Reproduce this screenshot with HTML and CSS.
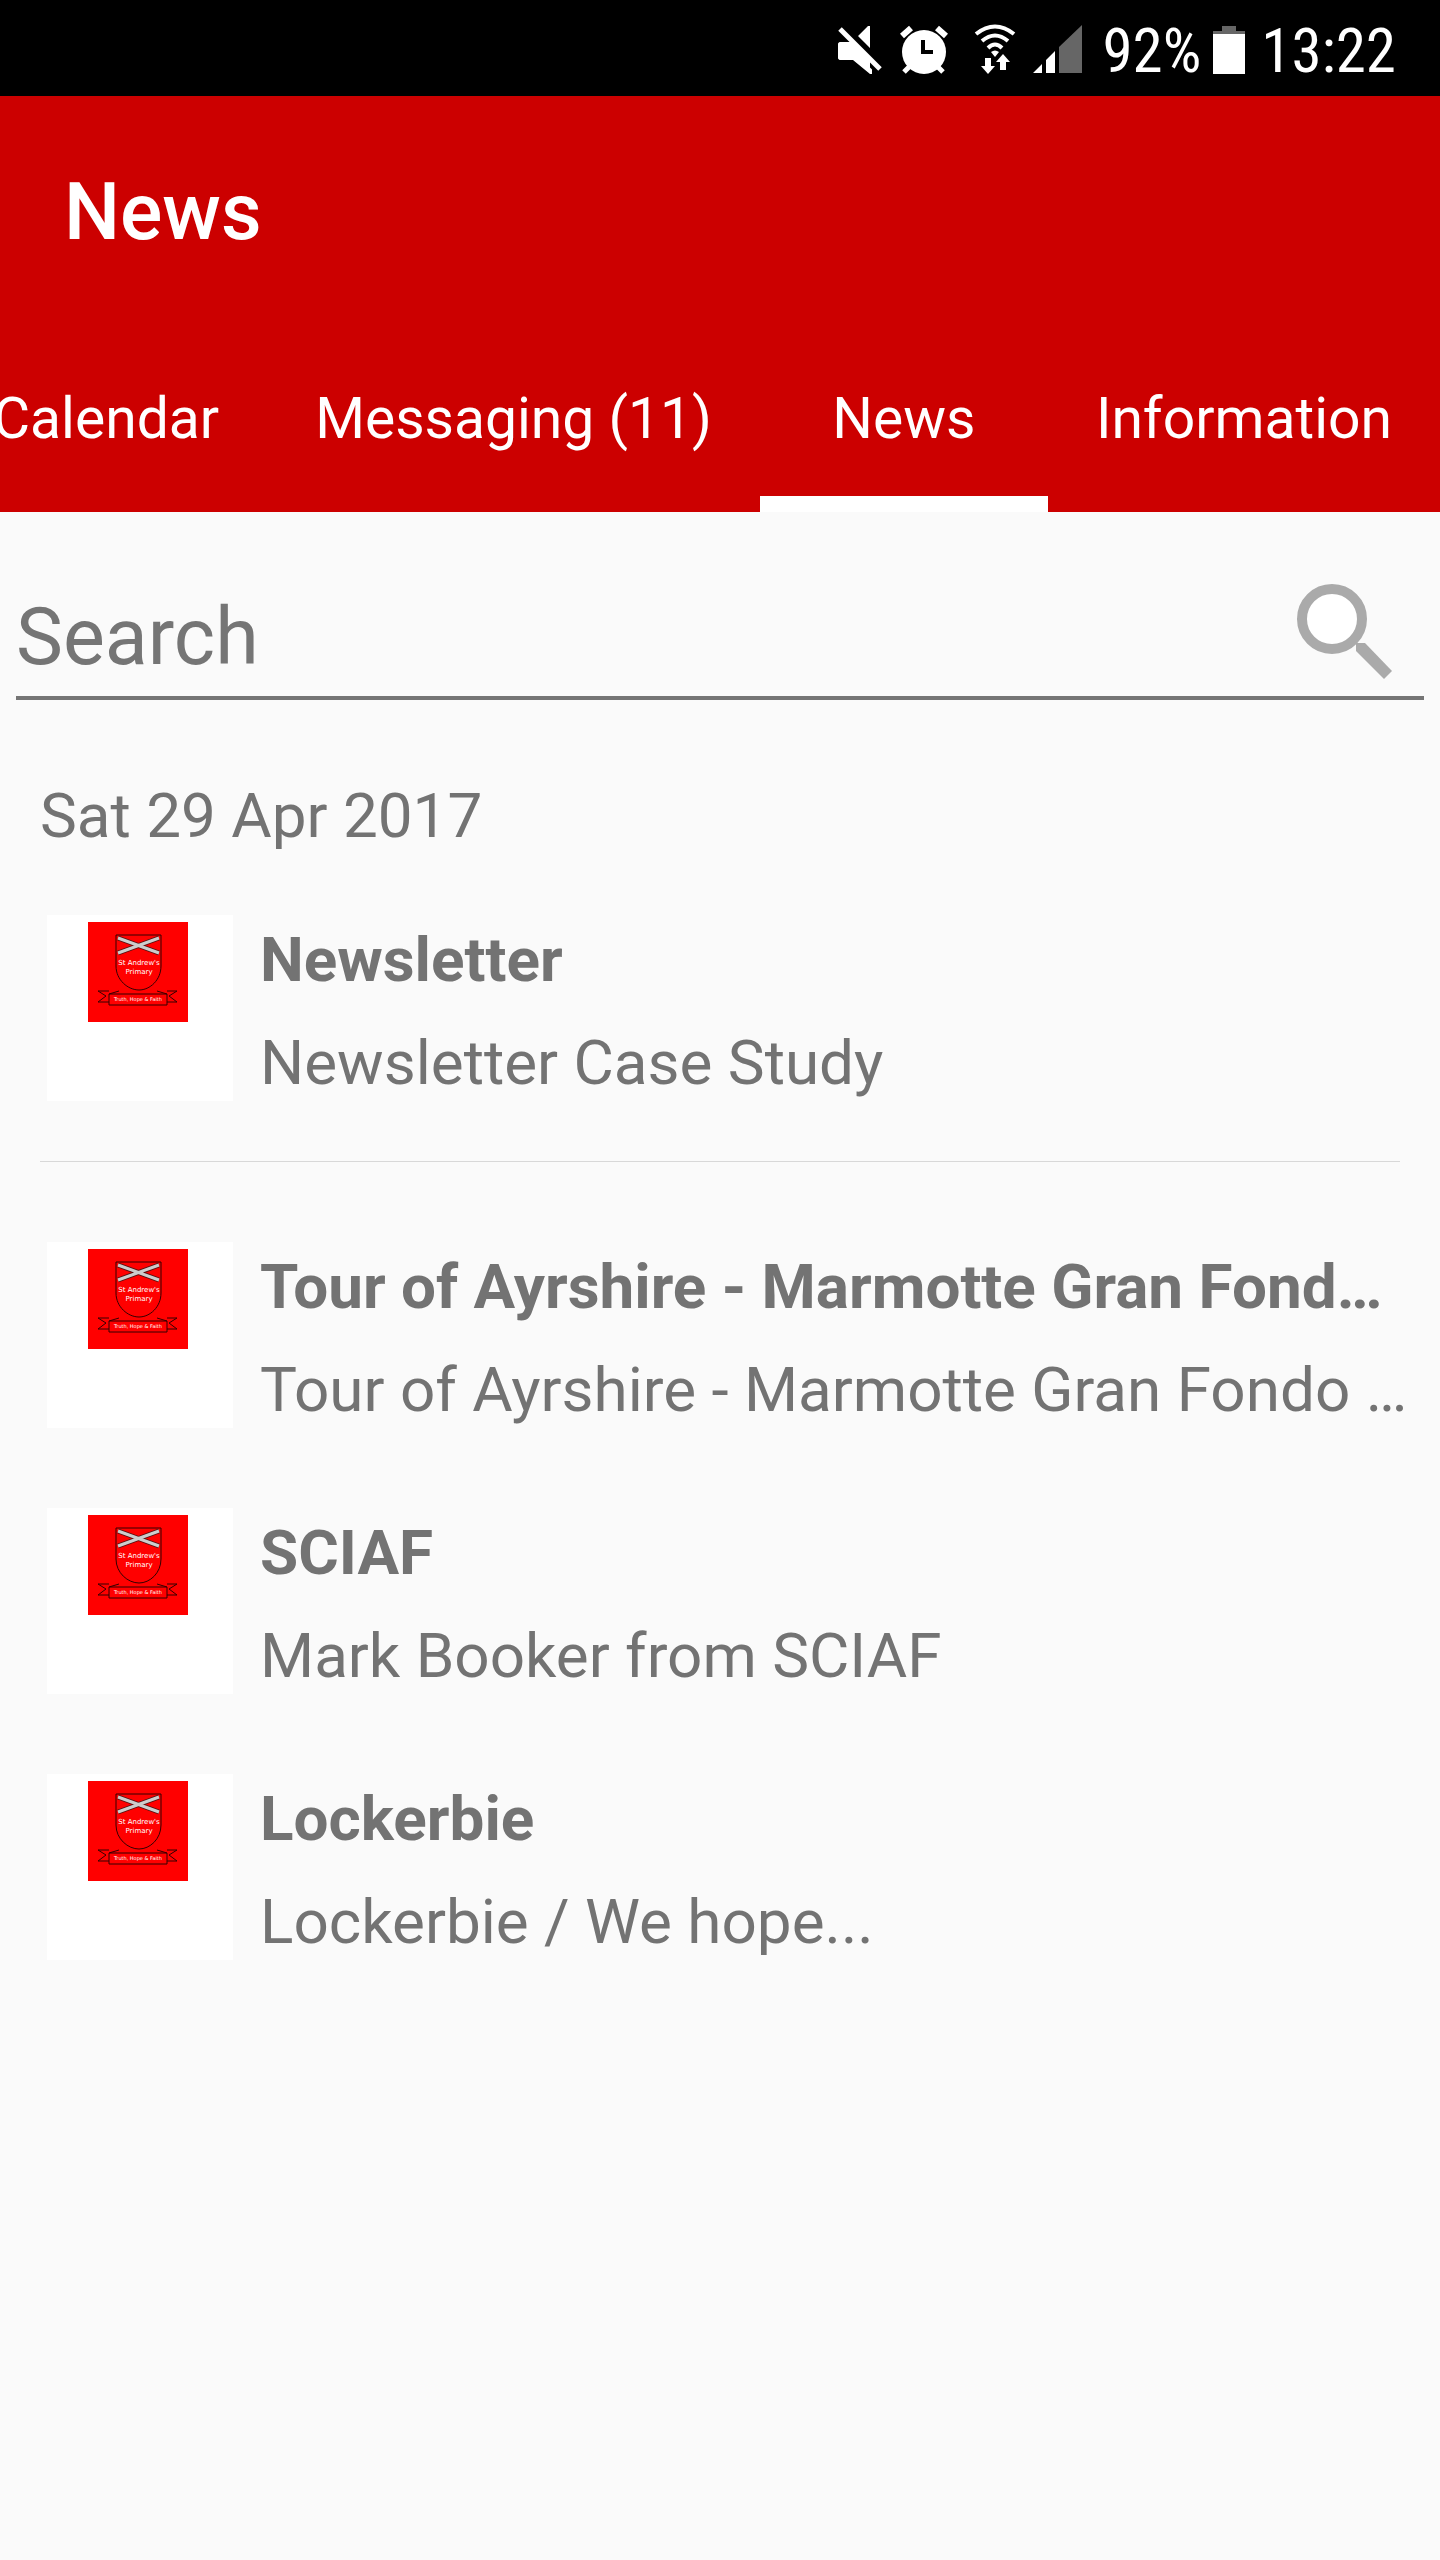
FILE: index.html
```html
<!DOCTYPE html>
<html lang="en">
<head>
<meta charset="utf-8">
<meta name="viewport" content="width=device-width, initial-scale=1">
<title>News</title>
<link rel="stylesheet" href="styles.css">
</head>
<body>
<svg class="defs" aria-hidden="true">
  <symbol id="crest" viewBox="0 0 100 100">
    <path fill="#f00" d="M0 0h100v100H0z"/>
    <g fill="none" stroke="#300" stroke-width="1">
      <path d="M28 13h45v31c0 14-11 24-22 24s-23-10-23-24z"/>
      <path d="M21 69H10l8 5-8 6h11M79 69h10l-8 5 8 6H79M21 72l10-3M79 72l-10-3"/>
      <path d="M21 72h58v11H21z"/>
    </g>
    <path d="M30 16l41 15M30 31l41-15" stroke="#511" stroke-width="5"/>
    <path d="M30 16l41 15M30 31l41-15" stroke="#ccc" stroke-width="3"/>
    <g fill="#fff" text-anchor="middle" font-family="DejaVu Sans, sans-serif">
      <text x="51" y="43" font-size="7">St Andrew's</text>
      <text x="51" y="52" font-size="7">Primary</text>
      <text x="50" y="79" font-size="5">Truth, Hope &amp; Faith</text>
    </g>
  </symbol>
</svg>

<div class="status">
  <svg class="status-icons" viewBox="0 0 252 52" width="252" height="52" fill="#fff" role="img" aria-label="Muted, alarm set, Wi-Fi, mobile signal">
    <path d="M3 18h12l19 17v15h-2L15 36H3q-3 0-3-3V21q0-3 3-3zM20 12L30 2h2v22z"/>
    <path d="M2 5l40 40" stroke="#000" stroke-width="12"/>
    <path d="M0 21q0-3 3-3h13l16 16v15L16 36H3q-3 0-3-3z"/>
    <path d="M2 5l40 40" stroke="#fff" stroke-width="5"/>
    <circle cx="86" cy="28" r="22"/>
    <path d="M64 12l9-8M99 4l9 8" stroke="#fff" stroke-width="6"/>
    <path d="M72 42l-6 6M99 42l6 6" stroke="#fff" stroke-width="5"/>
    <path d="M85 16v12h10" fill="none" stroke="#000" stroke-width="4"/>
    <g fill="none" stroke="#fff" stroke-width="4">
      <path d="M138 10q19-15 38 0M144 17q13-11 26 0M150 24q7-7 14 0"/>
    </g>
    <path d="M153 28q4-3 8 0l-4 5zM147 34h6v8h4l-7 8-7-8h4zM162 46v-8h-4l7-8 7 8h-4v8z"/>
    <path d="M195 49l9-9v9zM208 36l9-9v22h-9z"/>
    <path fill="#666" d="M221 23l23-22v48h-23z"/>
  </svg>
  <span class="status-text">92%</span>
  <svg class="battery" viewBox="0 0 32 48" width="32" height="48" role="img" aria-label="Battery"><path fill="#666" d="M9 0h14v5h9v4H0V5h9z"/><path fill="#fff" d="M0 8h32v40H0z"/></svg>
  <time class="status-text clock">13:22</time>
</div>

<header class="appbar">
  <h1 class="title">News</h1>
  <nav class="tabs">
    <a class="tab" href="#calendar">Calendar</a>
    <a class="tab" href="#messaging">Messaging (11)</a>
    <a class="tab tab-active" href="#news" aria-current="page">News</a>
    <a class="tab" href="#information">Information</a>
  </nav>
</header>

<main>
  <form class="search">
    <input class="search-input" type="search" placeholder="Search" aria-label="Search">
    <button class="search-button" type="submit" aria-label="Search">
      <svg viewBox="0 0 100 100" width="100" height="100">
        <circle cx="38" cy="38" r="30" fill="#fff" stroke="#aaa" stroke-width="10"/>
        <path d="M62 62h9l27 28-8 8-28-28z" fill="#aaa"/>
      </svg>
    </button>
  </form>

  <section class="news">
    <h2 class="date">Sat 29 Apr 2017</h2>
    <article class="item">
      <div class="thumb"><svg class="crest"><use href="#crest"/></svg></div>
      <div class="copy"><h3 class="headline">Newsletter</h3><p class="summary">Newsletter Case Study</p></div>
    </article>
    <hr class="divider">
    <article class="item">
      <div class="thumb"><svg class="crest"><use href="#crest"/></svg></div>
      <div class="copy"><h3 class="headline">Tour of Ayrshire - Marmotte Gran Fond…</h3><p class="summary">Tour of Ayrshire - Marmotte Gran Fondo …</p></div>
    </article>
    <article class="item">
      <div class="thumb"><svg class="crest"><use href="#crest"/></svg></div>
      <div class="copy"><h3 class="headline">SCIAF</h3><p class="summary">Mark Booker from SCIAF</p></div>
    </article>
    <article class="item">
      <div class="thumb"><svg class="crest"><use href="#crest"/></svg></div>
      <div class="copy"><h3 class="headline">Lockerbie</h3><p class="summary">Lockerbie / We hope...</p></div>
    </article>
  </section>
</main>
</body>
</html>
```
FILE: styles.css
```css
* { box-sizing: border-box; margin: 0; padding: 0; }

body {
  min-height: 100vh;
  background: #fafafa;
  color: #737373;
  font-family: Roboto, "Liberation Sans", sans-serif;
  font-size: 62px;
  overflow-x: hidden;
}

.defs { display: none; }

.status {
  display: flex;
  justify-content: flex-end;
  align-items: center;
  gap: 12px;
  height: 96px;
  padding: 4px 44px 0 0;
  background: #000;
  color: #fff;
}
.status-text {
  padding-top: 2px;
  font-family: "Roboto Condensed", Roboto, sans-serif;
  font-size: 61px;
  line-height: 64px;
}
.clock { padding-left: 4px; }

.appbar { background: #c00; color: #fff; }
.title {
  padding: 8px 64px 0;
  font-size: 79px;
  font-weight: 500;
  line-height: 216px;
}
.tabs {
  display: flex;
  justify-content: flex-end;
  overflow: hidden;
}
.tab {
  flex: none;
  min-width: 288px;
  height: 192px;
  padding: 4px 48px 0;
  border-bottom: 16px solid transparent;
  color: #fff;
  font-size: 57px;
  line-height: 190px;
  text-align: center;
  text-decoration: none;
  white-space: nowrap;
}
.tab-active { border-color: #fff; }

.search {
  display: flex;
  align-items: center;
  height: 188px;
  margin: 0 16px;
  padding: 54px 24px 0 0;
  border-bottom: 4px solid #757575;
}
.search-input {
  flex: 1;
  min-width: 0;
  padding-top: 12px;
  border: 0;
  outline: 0;
  background: none;
  color: inherit;
  font-family: inherit;
  font-size: 79px;
}
.search-input::placeholder { color: #757575; opacity: 1; }
.search-button { flex: none; width: 112px; border: 0; background: none; }
.search-button svg { display: block; margin: auto; }

.news { padding: 76px 28px 76px 40px; }
.date { font-size: 62px; font-weight: 400; line-height: 80px; }
.item { display: flex; gap: 27px; height: 186px; margin: 59px 0 0 7px; }
.item + .item { margin-top: 80px; }
.divider { height: 1px; margin: 60px 12px 0 0; border: 0; background: #d8d8d8; }
.divider + .item { margin-top: 80px; }
.thumb { flex: none; width: 186px; height: 186px; padding: 7px 41px; background: #fff; }
.crest { display: block; width: 100px; height: 100px; }
.copy { min-width: 0; flex: 1; }
.headline, .summary {
  overflow: hidden;
  text-overflow: ellipsis;
  white-space: nowrap;
  font-size: 62px;
}
.headline { font-weight: 700; line-height: 90px; }
.summary { line-height: 116px; }
```
